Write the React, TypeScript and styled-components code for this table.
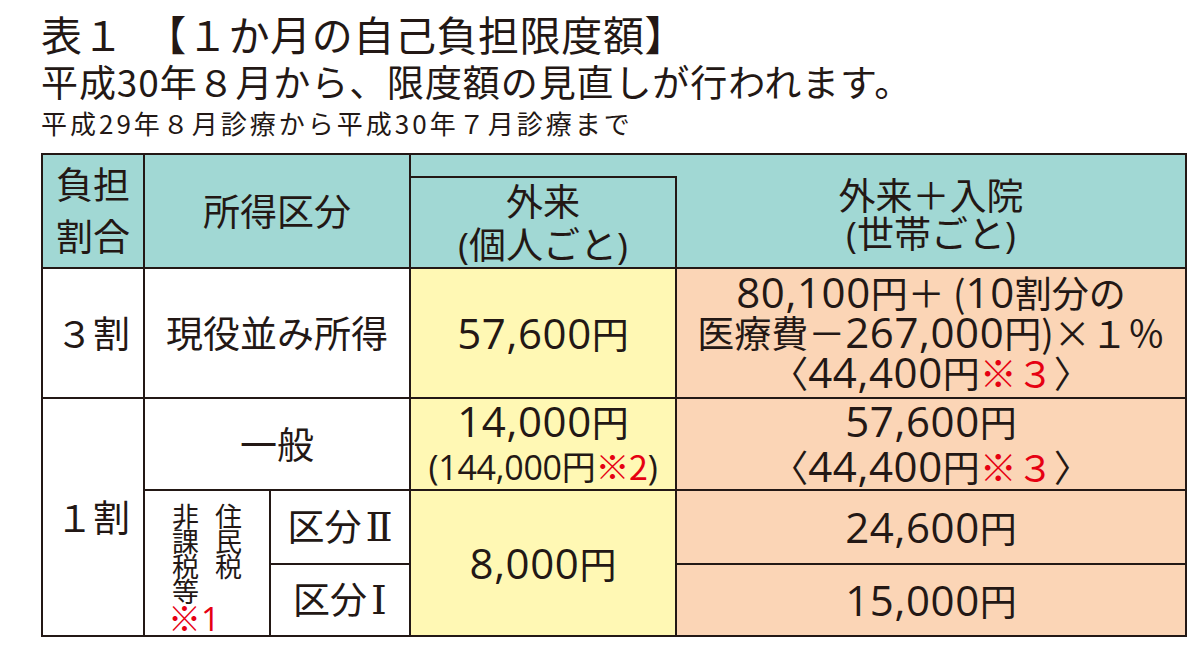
import React from "react";
import styled, { createGlobalStyle, css } from "styled-components";

const GlobalStyle = createGlobalStyle`
  html, body {
    margin: 0;
    padding: 0;
    background: #ffffff;
  }
  body {
    font-family: "Noto Sans CJK JP", "Noto Sans", sans-serif;
    color: #231815;
  }
`;

type Bg = "teal" | "yellow" | "peach" | "white";

const bgColors: Record<Bg, string> = {
  teal: "#a1d8d4",
  yellow: "#fff8b4",
  peach: "#fbd5b6",
  white: "#ffffff",
};

const Page = styled.div`
  padding: 9px 0 0 41px;
  width: 1159px;
`;

const Title = styled.h1`
  margin: 0;
  font-size: 41px;
  line-height: 48px;
  font-weight: 400;
  letter-spacing: 0.6px;
  white-space: nowrap;
`;

const Lead = styled.p`
  margin: 0;
  font-size: 37px;
  line-height: 48px;
  letter-spacing: 0.9px;
  white-space: nowrap;
`;

const Period = styled.p`
  margin: 0;
  font-size: 26px;
  line-height: 36px;
  letter-spacing: 3px;
  white-space: nowrap;
`;

const Table = styled.table`
  margin: 12px 0 0 0;
  border-collapse: collapse;
  table-layout: fixed;
  width: 1144px;
  border: 2px solid #231815;
`;

const Row = styled.tr<{ $h: number }>`
  height: ${(p) => p.$h}px;
`;

const Cell = styled.td<{
  $bg?: Bg;
  $lh?: number;
  $noTop?: boolean;
  $noBottom?: boolean;
  $padBottom?: number;
}>`
  border: 2px solid #231815;
  background: ${(p) => bgColors[p.$bg ?? "white"]};
  text-align: center;
  vertical-align: middle;
  padding: 0 0 ${(p) => p.$padBottom ?? 0}px 0;
  font-family: "Open Sans", "Noto Sans CJK JP", sans-serif;
  font-size: 37px;
  font-weight: 400;
  line-height: ${(p) => p.$lh ?? 43}px;
  color: #231815;
  white-space: nowrap;
  ${(p) =>
    p.$noTop &&
    css`
      border-top: none;
    `}
  ${(p) =>
    p.$noBottom &&
    css`
      border-bottom: none;
    `}
`;

const Num = styled.span`
  font-family: "Open Sans", "Noto Sans CJK JP", sans-serif;
  font-size: 42px;
  letter-spacing: 0.6px;
`;

const Jp = styled.span`
  font-family: "Noto Sans CJK JP", sans-serif;
`;

const Red = styled.span`
  color: #e60012;
  font-family: "Noto Sans CJK JP", sans-serif;
`;

const Narrow = styled.span`
  font-size: 34px;
  letter-spacing: -0.3px;
`;

const Roman = styled.span`
  font-family: "DejaVu Serif", "Noto Sans CJK JP", serif;
  font-size: 40px;
  margin-left: 4px;
`;

const VertCell = styled(Cell)`
  vertical-align: top;
  padding-top: 12px;
`;

const VertWrap = styled.div`
  display: inline-flex;
  flex-direction: column;
  align-items: flex-start;
  font-family: "Noto Sans CJK JP", sans-serif;
`;

const VertText = styled.div`
  writing-mode: vertical-rl;
  font-size: 27px;
  line-height: 43px;
  letter-spacing: -2px;
  height: 102px;
  text-align: start;
`;

const Note = styled.div`
  margin-left: 4px;
  font-family: "Open Sans", "Noto Sans CJK JP", sans-serif;
  font-size: 33px;
  line-height: 28px;
  color: #e60012;
`;

function fmt(text: string) {
  return text
    .split(/([0-9,]+)/)
    .filter((s) => s.length > 0)
    .map((s, i) =>
      /^[0-9,]+$/.test(s) ? <Num key={i}>{s}</Num> : <Jp key={i}>{s}</Jp>
    );
}

export default function App() {
  return (
    <>
      <GlobalStyle />
      <Page>
        <Title>表１　【１か月の自己負担限度額】</Title>
        <Lead>平成30年８月から、限度額の見直しが行われます。</Lead>
        <Period>平成29年８月診療から平成30年７月診療まで</Period>
        <Table>
          <colgroup>
            <col style={{ width: 102 }} />
            <col style={{ width: 126 }} />
            <col style={{ width: 140 }} />
            <col style={{ width: 266 }} />
            <col style={{ width: 510 }} />
          </colgroup>
          <thead>
            <Row $h={23}>
              <Cell as="th" $bg="teal" rowSpan={2} $lh={52}>
                負担
                <br />
                割合
              </Cell>
              <Cell as="th" $bg="teal" rowSpan={2} colSpan={2}>
                所得区分
              </Cell>
              <Cell as="th" $bg="teal" colSpan={2} $noBottom />
            </Row>
            <Row $h={91}>
              <Cell as="th" $bg="teal">
                外来
                <br />
                (個人ごと)
              </Cell>
              <Cell as="th" $bg="teal" $noTop $lh={38} $padBottom={14}>
                外来＋入院
                <br />
                (世帯ごと)
              </Cell>
            </Row>
          </thead>
          <tbody>
            <Row $h={130}>
              <Cell>３割</Cell>
              <Cell colSpan={2}>現役並み所得</Cell>
              <Cell $bg="yellow">{fmt("57,600円")}</Cell>
              <Cell $bg="peach" $lh={38}>
                {fmt("80,100円＋ (10割分の")}
                <br />
                {fmt("医療費－267,000円)×１％")}
                <br />
                {fmt("〈44,400円")}
                <Red>※３</Red>
                <Jp>〉</Jp>
              </Cell>
            </Row>
            <Row $h={92}>
              <Cell rowSpan={3}>１割</Cell>
              <Cell colSpan={2}>一般</Cell>
              <Cell $bg="yellow">
                {fmt("14,000円")}
                <br />
                <Narrow>
                  (144,000円<Red>※2</Red>)
                </Narrow>
              </Cell>
              <Cell $bg="peach">
                {fmt("57,600円")}
                <br />
                {fmt("〈44,400円")}
                <Red>※３</Red>
                <Jp>〉</Jp>
              </Cell>
            </Row>
            <Row $h={74}>
              <VertCell rowSpan={2}>
                <VertWrap>
                  <VertText>
                    住民税
                    <br />
                    非課税等
                  </VertText>
                  <Note>※1</Note>
                </VertWrap>
              </VertCell>
              <Cell>
                区分<Roman>Ⅱ</Roman>
              </Cell>
              <Cell $bg="yellow" rowSpan={2}>
                {fmt("8,000円")}
              </Cell>
              <Cell $bg="peach">{fmt("24,600円")}</Cell>
            </Row>
            <Row $h={72}>
              <Cell>
                区分<Roman>Ⅰ</Roman>
              </Cell>
              <Cell $bg="peach">{fmt("15,000円")}</Cell>
            </Row>
          </tbody>
        </Table>
      </Page>
    </>
  );
}
